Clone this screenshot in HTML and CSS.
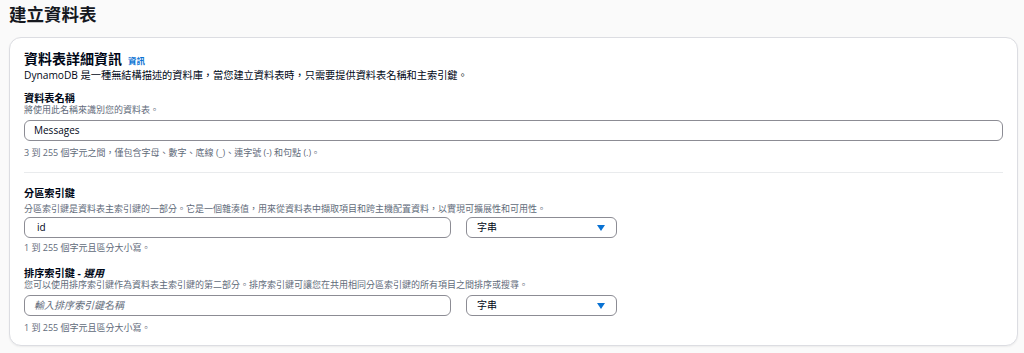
FILE: index.html
```html
<!DOCTYPE html>
<html lang="zh-Hant">
<head>
<meta charset="utf-8">
<title>建立資料表</title>
<link rel="stylesheet" href="styles.css">
</head>
<body>
<div class="page">
  <h1 class="page-title">建立資料表</h1>
  <section class="card">
    <div class="card-head">
      <h2 class="card-title">資料表詳細資訊</h2>
      <a class="info-link" href="#">資訊</a>
    </div>
    <p class="card-desc">DynamoDB 是一種無結構描述的資料庫，當您建立資料表時，只需要提供資料表名稱和主索引鍵。</p>

    <div class="field f-name">
      <div class="label">資料表名稱</div>
      <div class="desc">將使用此名稱來識別您的資料表。</div>
      <div class="input full">Messages</div>
      <div class="hint">3 到 255 個字元之間，僅包含字母、數字、底線 (_)、連字號 (-) 和句點 (.)。</div>
    </div>

    <hr class="divider">

    <div class="field f-part">
      <div class="label">分區索引鍵</div>
      <div class="desc">分區索引鍵是資料表主索引鍵的一部分。它是一個雜湊值，用來從資料表中擷取項目和跨主機配置資料，以實現可擴展性和可用性。</div>
      <div class="row">
        <div class="input key id">id</div>
        <div class="select">
          <span>字串</span>
          <svg class="caret" width="8" height="6" viewBox="0 0 8 6"><path d="M0 0 H8 L4 6 Z" fill="#0972d3"/></svg>
        </div>
      </div>
      <div class="hint">1 到 255 個字元且區分大小寫。</div>
    </div>

    <div class="field f-sort">
      <div class="label">排序索引鍵 - <em>選用</em></div>
      <div class="desc">您可以使用排序索引鍵作為資料表主索引鍵的第二部分。排序索引鍵可讓您在共用相同分區索引鍵的所有項目之間排序或搜尋。</div>
      <div class="row">
        <div class="input key placeholder">輸入排序索引鍵名稱</div>
        <div class="select">
          <span>字串</span>
          <svg class="caret" width="8" height="6" viewBox="0 0 8 6"><path d="M0 0 H8 L4 6 Z" fill="#0972d3"/></svg>
        </div>
      </div>
      <div class="hint">1 到 255 個字元且區分大小寫。</div>
    </div>
  </section>
</div>
</body>
</html>
```

FILE: styles.css
```css
* { box-sizing: border-box; }
html, body { margin: 0; padding: 0; }
body {
  background: #fafafa;
  color: #000716;
  font-family: "Open Sans", "Noto Sans CJK TC", sans-serif;
  width: 1024px;
  height: 353px;
  overflow: hidden;
}
.page {
  padding: 3px 6px 0 9px;
}
.page-title {
  margin: 0;
  font-size: 17.5px;
  line-height: 22px;
  font-weight: 700;
  color: #16191f;
}
.card {
  margin-top: 12px;
  background: #fff;
  border: 1px solid #dcdde2;
  border-radius: 12px;
  padding: 12px 14px 0 14px;
  height: 309px;
  box-shadow: 0 1px 2px rgba(0, 7, 22, 0.06);
}
.card-head {
  display: flex;
  align-items: baseline;
  gap: 6px;
}
.card-title {
  margin: 0;
  font-size: 14px;
  line-height: 18px;
  font-weight: 700;
}
.info-link {
  font-size: 8.5px;
  font-weight: 700;
  color: #0972d3;
  text-decoration: none;
}
.card-desc {
  margin: 0;
  font-size: 10.2px;
  line-height: 14px;
  color: #000716;
}
.label {
  font-size: 10.2px;
  line-height: 12px;
  font-weight: 700;
}
.label em { font-style: italic; }
.desc {
  font-size: 9px;
  line-height: 12px;
  color: #5f6b7a;
}
.input, .select {
  height: 21px;
  border: 1px solid #8c8c94;
  border-radius: 6px;
  background: #fff;
  font-size: 10px;
  line-height: 19px;
  padding: 0 9px;
  color: #000716;
}
.input.full { width: 100%; }
.row {
  display: flex;
  gap: 15px;
}
.input.key { width: 427px; }
.input.id { padding-left: 12px; }
.input.placeholder {
  color: #5f6b7a;
  font-style: italic;
}
.select {
  width: 151px;
  display: flex;
  align-items: center;
  justify-content: space-between;
  padding: 0 11px 0 10px;
}
.caret { display: block; }
.hint {
  font-size: 9px;
  line-height: 12px;
  color: #5f6b7a;
}
.divider {
  margin: 13px 0 0 0;
  border: 0;
  border-top: 1px solid #e9ebed;
  height: 0;
}

/* field spacing */
.f-name { margin-top: 10px; }
.f-name .input { margin-top: 4px; }
.f-name .hint { margin-top: 6px; }

.f-part { margin-top: 14px; }
.f-part .desc { margin-top: 4px; }
.f-part .row { margin-top: 2px; }
.f-part .hint { margin-top: 4px; }

.f-sort { margin-top: 13px; }
.f-sort .row { margin-top: 4px; }
.f-sort .hint { margin-top: 6px; }
```
